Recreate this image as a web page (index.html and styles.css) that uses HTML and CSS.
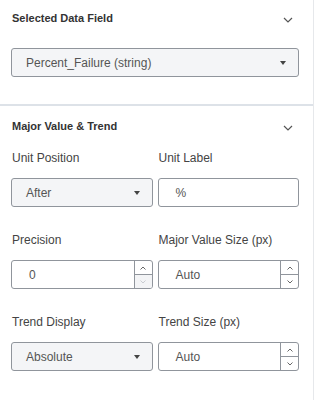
FILE: index.html
```html
<!DOCTYPE html>
<html lang="en">
<head>
    <meta charset="UTF-8">
    <title>Single Value Settings</title>
    <link rel="stylesheet" href="styles.css">
</head>
<body>
    <div class="panel">
        <section class="group first">
            <div class="group-head">
                <span>Selected Data Field</span>
                <svg class="chevron" width="10" height="6" viewBox="0 0 10 6"><path d="M1 1l4 4 4-4" fill="none" stroke="#555" stroke-width="1.2"/></svg>
            </div>
            <div class="select">
                <span>Percent_Failure (string)</span>
                <span class="caret"></span>
            </div>
        </section>

        <section class="group">
            <div class="group-head">
                <span>Major Value &amp; Trend</span>
                <svg class="chevron" width="10" height="6" viewBox="0 0 10 6"><path d="M1 1l4 4 4-4" fill="none" stroke="#555" stroke-width="1.2"/></svg>
            </div>
            <div class="fields">
                <div class="field">
                    <label>Unit Position</label>
                    <div class="select">
                        <span>After</span>
                        <span class="caret"></span>
                    </div>
                </div>
                <div class="field">
                    <label>Unit Label</label>
                    <div class="input">%</div>
                </div>
                <div class="field">
                    <label>Precision</label>
                    <div class="input number">
                        <span class="value">0</span>
                        <div class="spin">
                            <span class="up"><svg width="6" height="4" viewBox="0 0 6 4"><path d="M0.5 3.5l2.5-2.5 2.5 2.5" fill="none" stroke="currentColor" stroke-width="1"/></svg></span>
                            <span class="down off"><svg width="6" height="4" viewBox="0 0 6 4"><path d="M0.5 0.5l2.5 2.5 2.5-2.5" fill="none" stroke="currentColor" stroke-width="1"/></svg></span>
                        </div>
                    </div>
                </div>
                <div class="field">
                    <label>Major Value Size (px)</label>
                    <div class="input number">
                        <span class="value">Auto</span>
                        <div class="spin">
                            <span class="up"><svg width="6" height="4" viewBox="0 0 6 4"><path d="M0.5 3.5l2.5-2.5 2.5 2.5" fill="none" stroke="currentColor" stroke-width="1"/></svg></span>
                            <span class="down"><svg width="6" height="4" viewBox="0 0 6 4"><path d="M0.5 0.5l2.5 2.5 2.5-2.5" fill="none" stroke="currentColor" stroke-width="1"/></svg></span>
                        </div>
                    </div>
                </div>
                <div class="field">
                    <label>Trend Display</label>
                    <div class="select">
                        <span>Absolute</span>
                        <span class="caret"></span>
                    </div>
                </div>
                <div class="field">
                    <label>Trend Size (px)</label>
                    <div class="input number">
                        <span class="value">Auto</span>
                        <div class="spin">
                            <span class="up"><svg width="6" height="4" viewBox="0 0 6 4"><path d="M0.5 3.5l2.5-2.5 2.5 2.5" fill="none" stroke="currentColor" stroke-width="1"/></svg></span>
                            <span class="down"><svg width="6" height="4" viewBox="0 0 6 4"><path d="M0.5 0.5l2.5 2.5 2.5-2.5" fill="none" stroke="currentColor" stroke-width="1"/></svg></span>
                        </div>
                    </div>
                </div>
            </div>
        </section>
    </div>
</body>
</html>
```

FILE: styles.css
```css
body {
    margin: 0;
    font-family: "Liberation Sans", Arial, sans-serif;
    color: #3c3c3c;
    background: #fff;
}
.panel {
    width: 313px;
    height: 400px;
    border-right: 1px solid #e6e8eb;
}
.group {
    padding: 0 14px 0 11px;
}
.group.first {
    padding-bottom: 27px;
    border-bottom: 2px solid #dde2e8;
}
.group-head {
    display: flex;
    justify-content: space-between;
    align-items: center;
    padding-left: 1px;
    font-size: 11px;
    font-weight: bold;
    color: #333;
}
.group.first .group-head {
    height: 36px;
    margin-bottom: 12px;
}
.group:not(.first) .group-head {
    height: 40px;
    margin-bottom: 3px;
}
.chevron {
    margin-right: 6px;
    margin-top: 4px;
}
.select {
    display: flex;
    justify-content: space-between;
    align-items: center;
    height: 27px;
    padding: 0 12px 0 14px;
    background: #f4f5f7;
    border: 1px solid #90959c;
    border-radius: 3px;
    font-size: 12px;
    color: #555;
}
.caret {
    width: 0;
    height: 0;
    border-left: 3.5px solid transparent;
    border-right: 3.5px solid transparent;
    border-top: 4px solid #444;
}
.fields {
    display: grid;
    grid-template-columns: 1fr 1fr;
    column-gap: 5px;
    row-gap: 24px;
}
.field label {
    display: block;
    font-size: 12px;
    color: #444;
    padding-left: 1px;
    margin: 2px 0 13px;
}
.input {
    display: flex;
    align-items: center;
    height: 27px;
    padding-left: 17px;
    border: 1px solid #90959c;
    border-radius: 3px;
    font-size: 12px;
    color: #555;
}
.input.number {
    padding-left: 0;
    align-items: stretch;
    overflow: hidden;
}
.number .value {
    flex: 1;
    display: flex;
    align-items: center;
    padding-left: 17px;
}
.spin {
    width: 17px;
    display: flex;
    flex-direction: column;
    border-left: 1px solid #90959c;
}
.spin span {
    flex: 1;
    display: flex;
    align-items: center;
    justify-content: center;
    color: #666;
}
.spin .up {
    border-bottom: 1px solid #90959c;
}
.spin .off {
    background: #f3f4f6;
    color: #c9ccd1;
}
```
